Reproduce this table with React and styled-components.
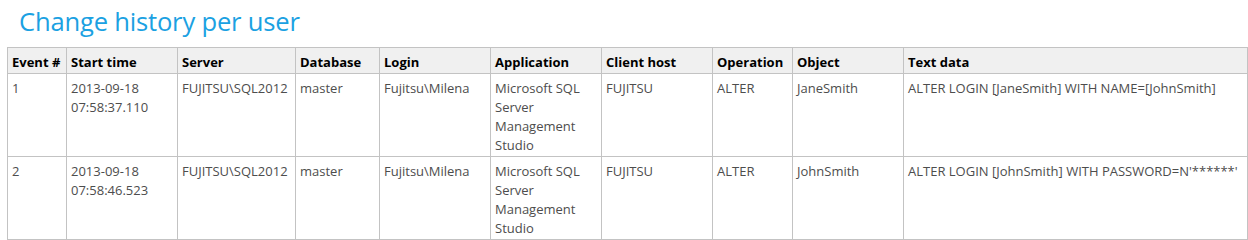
import React from "react";
import styled, { createGlobalStyle } from "styled-components";

const GlobalStyle = createGlobalStyle`
  body {
    margin: 0;
    background: #fff;
    font-family: "Open Sans", "Noto Sans", sans-serif;
  }
`;

const Page = styled.div`
  padding: 5px 1px 0 7px;
`;

const Title = styled.h1`
  margin: 0 0 8px 12px;
  font-size: 25.6px;
  font-weight: 400;
  line-height: 34px;
  color: #1ba1e2;
  letter-spacing: -0.2px;
`;

const Table = styled.table`
  width: 1240px;
  border-collapse: collapse;
  table-layout: fixed;
  font-size: 13px;
`;

const Head = styled.th`
  width: ${(p) => p.$w - 9}px;
  background: #f0f0f0;
  border: 1px solid #c3c3c3;
  padding: 5px 4px 2px;
  text-align: left;
  font-weight: 700;
  color: #000;
  line-height: 18px;
  white-space: nowrap;
  overflow: hidden;
`;

const Cell = styled.td`
  border: 1px solid #c3c3c3;
  padding: 5px 4px 1px;
  vertical-align: top;
  color: #4d4d4d;
  line-height: 19px;
  white-space: nowrap;
`;

const columns = [
  ["Event #", 59],
  ["Start time", 111],
  ["Server", 118],
  ["Database", 84],
  ["Login", 111],
  ["Application", 111],
  ["Client host", 111],
  ["Operation", 80],
  ["Object", 111],
  ["Text data", 344],
];

const rows = [
  {
    id: "1",
    time: "07:58:37.110",
    object: "JaneSmith",
    text: "ALTER LOGIN [JaneSmith] WITH NAME=[JohnSmith]",
  },
  {
    id: "2",
    time: "07:58:46.523",
    object: "JohnSmith",
    text: "ALTER LOGIN [JohnSmith] WITH PASSWORD=N'******'",
  },
];

export default function App() {
  return (
    <Page>
      <GlobalStyle />
      <Title>Change history per user</Title>
      <Table>
        <thead>
          <tr>
            {columns.map(([name, w]) => (
              <Head key={name} $w={w}>
                {name}
              </Head>
            ))}
          </tr>
        </thead>
        <tbody>
          {rows.map((r) => (
            <tr key={r.id}>
              <Cell>{r.id}</Cell>
              <Cell>
                2013-09-18
                <br />
                {r.time}
              </Cell>
              <Cell>FUJITSU\SQL2012</Cell>
              <Cell>master</Cell>
              <Cell>Fujitsu\Milena</Cell>
              <Cell>
                Microsoft SQL
                <br />
                Server
                <br />
                Management
                <br />
                Studio
              </Cell>
              <Cell>FUJITSU</Cell>
              <Cell>ALTER</Cell>
              <Cell>{r.object}</Cell>
              <Cell>{r.text}</Cell>
            </tr>
          ))}
        </tbody>
      </Table>
    </Page>
  );
}
